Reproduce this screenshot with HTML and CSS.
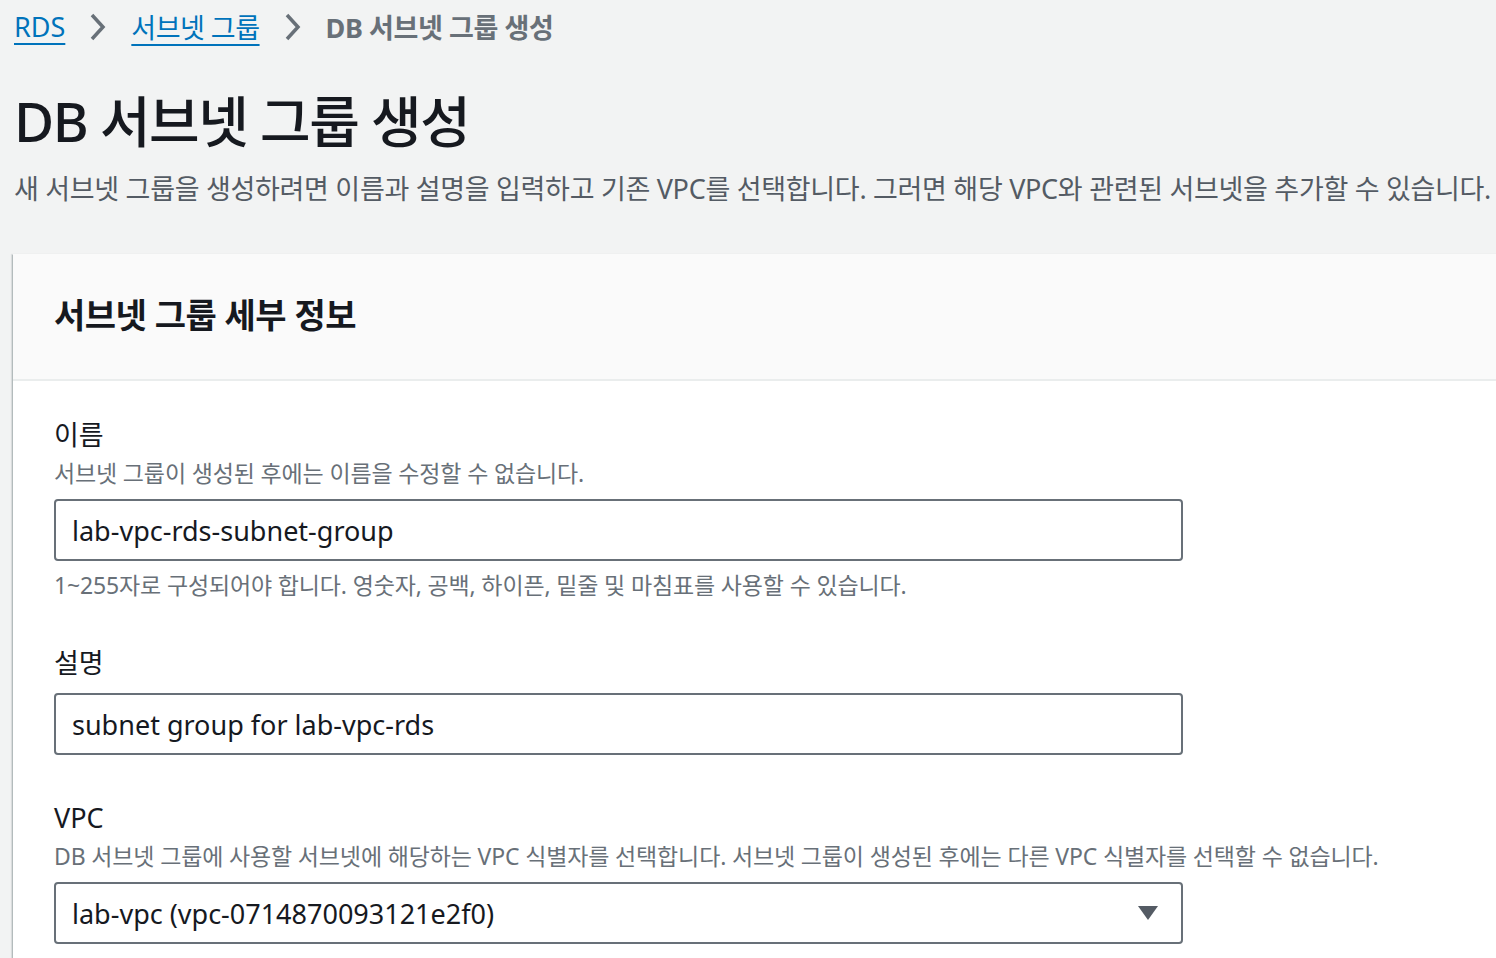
FILE: index.html
```html
<!DOCTYPE html>
<html lang="ko">
<head>
<meta charset="utf-8">
<title>DB 서브넷 그룹 생성</title>
<link rel="stylesheet" href="styles.css">
</head>
<body>
<div class="page">
  <nav class="breadcrumb">
    <a class="crumb-link" href="#">RDS</a>
    <svg class="chev" width="20" height="30" viewBox="0 0 20 30"><path d="M4 3 L15 15 L4 27" fill="none" stroke="#687078" stroke-width="3.5"/></svg>
    <a class="crumb-link crumb-ko" href="#">서브넷 그룹</a>
    <svg class="chev" width="20" height="30" viewBox="0 0 20 30"><path d="M4 3 L15 15 L4 27" fill="none" stroke="#687078" stroke-width="3.5"/></svg>
    <span class="crumb-current">DB 서브넷 그룹 생성</span>
  </nav>
  <h1 class="title">DB 서브넷 그룹 생성</h1>
  <p class="intro">새 서브넷 그룹을 생성하려면 이름과 설명을 입력하고 기존 VPC를 선택합니다. 그러면 해당 VPC와 관련된 서브넷을 추가할 수 있습니다.</p>

  <section class="card">
    <header class="card-header">
      <h2 class="card-title">서브넷 그룹 세부 정보</h2>
    </header>
    <div class="card-body">
      <div class="field">
        <div class="label">이름</div>
        <div class="desc">서브넷 그룹이 생성된 후에는 이름을 수정할 수 없습니다.</div>
        <div class="input">lab-vpc-rds-subnet-group</div>
        <div class="constraint">1~255자로 구성되어야 합니다. 영숫자, 공백, 하이픈, 밑줄 및 마침표를 사용할 수 있습니다.</div>
      </div>
      <div class="field field-wide">
        <div class="label">설명</div>
        <div class="input">subnet group for lab-vpc-rds</div>
      </div>
      <div class="field">
        <div class="label">VPC</div>
        <div class="desc">DB 서브넷 그룹에 사용할 서브넷에 해당하는 VPC 식별자를 선택합니다. 서브넷 그룹이 생성된 후에는 다른 VPC 식별자를 선택할 수 없습니다.</div>
        <div class="input select">
          <span>lab-vpc (vpc-0714870093121e2f0)</span>
          <svg class="caret" width="22" height="16" viewBox="0 0 22 16"><path d="M1 1 H21 L11 15 Z" fill="#545b64"/></svg>
        </div>
      </div>
    </div>
  </section>
</div>
</body>
</html>
```

FILE: styles.css
```css
html, body {
  margin: 0;
  padding: 0;
  background: #f2f3f3;
  overflow: hidden;
}
body {
  font-family: "Noto Sans", "Noto Sans CJK KR", sans-serif;
  color: #16191f;
  width: 1496px;
  height: 958px;
}
.page {
  padding: 0 0 0 14px;
}
.breadcrumb {
  display: flex;
  align-items: center;
  height: 52px;
  gap: 23px;
  font-size: 27px;
}
.crumb-link {
  color: #0073bb;
  text-decoration: underline;
  text-underline-offset: 6px;
  text-decoration-thickness: 2px;
}
.crumb-ko {
  letter-spacing: -0.5px;
}
.chev {
  display: block;
  margin-top: 2px;
}
.crumb-current {
  color: #687078;
  font-weight: 700;
  letter-spacing: -0.4px;
}
.title {
  margin: 33px 0 0 0;
  font-size: 55px;
  font-weight: 500;
  line-height: 72px;
  letter-spacing: -1.5px;
}
.intro {
  margin: 12px 0 0 0;
  font-size: 27px;
  line-height: 40px;
  color: #545b64;
  white-space: nowrap;
  letter-spacing: -0.3px;
}
.card {
  margin: 45px -40px 0 -1px;
  background: #ffffff;
  box-shadow: 0 1px 1px 0 rgba(0,28,36,.3), 1px 1px 1px 0 rgba(0,28,36,.15), -1px 1px 1px 0 rgba(0,28,36,.15), -2px 0 1px 0 rgba(0,28,36,.08);
}
.card-header {
  background: #fafafa;
  border-bottom: 2px solid #eaeded;
  box-sizing: border-box;
  height: 127px;
  display: flex;
  align-items: center;
  padding: 0 0 6px 41px;
}
.card-title {
  margin: 0;
  font-size: 34px;
  font-weight: 700;
  letter-spacing: -0.5px;
}
.card-body {
  padding: 34px 0 80px 41px;
}
.field {
  margin-bottom: 40px;
}
.field-wide {
  margin-bottom: 43px;
}
.label {
  font-size: 27px;
  line-height: 40px;
}
.desc, .constraint {
  font-size: 23px;
  line-height: 32px;
  color: #687078;
  letter-spacing: -0.15px;
}
.desc {
  margin-top: 2px;
}
.constraint {
  line-height: 36px;
  margin-top: 6px;
}
.input {
  box-sizing: border-box;
  width: 1129px;
  height: 62px;
  margin-top: 10px;
  border: 2px solid #687078;
  border-radius: 4px;
  background: #fff;
  display: flex;
  align-items: center;
  padding: 0 17px 0 16px;
  font-size: 27px;
}
.select {
  justify-content: space-between;
  padding-right: 22px;
}
.caret {
  display: block;
}
```
